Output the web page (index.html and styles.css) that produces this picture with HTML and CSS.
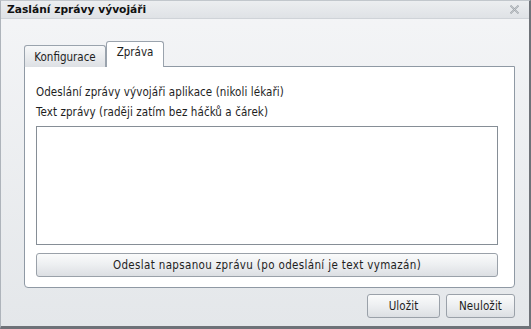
FILE: index.html
```html
<!DOCTYPE html>
<html lang="cs">
<head>
<meta charset="utf-8">
<title>Zaslání zprávy vývojáři</title>
<link rel="stylesheet" href="styles.css">
</head>
<body>
<div class="window">
  <div class="titlebar">
    <span class="title">Zaslání zprávy vývojáři</span>
    <span class="close" aria-label="Zavřít">
      <svg width="9" height="9" viewBox="0 0 9 9">
        <path d="M0.5 0.5 L8.5 8.5 M8.5 0.5 L0.5 8.5" stroke="#9aa0a6" stroke-width="1.6" fill="none"/>
        <path d="M0.5 0.5 L8.5 8.5 M8.5 0.5 L0.5 8.5" stroke="#e6e8ea" stroke-width="0.5" fill="none"/>
      </svg>
    </span>
  </div>
  <div class="content">
    <div class="tabs">
      <div class="tab">Konfigurace</div>
      <div class="tab active">Zpráva</div>
    </div>
    <div class="panel">
      <div class="line">Odeslání zprávy vývojáři aplikace (nikoli lékaři)</div>
      <div class="line">Text zprávy (raději zatím bez háčků a čárek)</div>
      <textarea class="message"></textarea>
      <button class="btn wide">Odeslat napsanou zprávu (po odeslání je text vymazán)</button>
    </div>
    <div class="footer">
      <button class="btn small">Uložit</button>
      <button class="btn small">Neuložit</button>
    </div>
  </div>
</div>
</body>
</html>
```
FILE: styles.css
```css
* { box-sizing: border-box; }
html, body { margin: 0; padding: 0; background: #ffffff; }
body {
  font-family: "DejaVu Sans Condensed", "DejaVu Sans", sans-serif;
  font-stretch: condensed;
  font-size: 11px;
  color: #1e1e1e;
}
.window {
  width: 531px;
  height: 329px;
  border-left: 1px solid #aeb4bb;
  border-top: 1px solid #c2c7cc;
  border-right: 2px solid #6e7278;
  border-bottom: 3px solid #6e7278;
  background: linear-gradient(#f4f5f7, #e4e7ea);
  display: flex;
  flex-direction: column;
}
.titlebar {
  height: 18px;
  display: flex;
  align-items: center;
  justify-content: space-between;
  padding: 0 10px 0 6px;
  background: linear-gradient(#eceef0, #dfe2e6);
  border-bottom: 1px solid #cfd3d8;
}
.title {
  font-family: "DejaVu Sans", sans-serif;
  font-stretch: normal;
  font-weight: bold;
  font-size: 10.7px;
  color: #111;
}
.close { display: flex; }
.content {
  flex: 1;
  padding: 22px 14px 0 23px;
  display: flex;
  flex-direction: column;
}
.tabs {
  display: flex;
  align-items: flex-end;
  height: 26px;
  position: relative;
  z-index: 1;
}
.tab {
  height: 22px;
  padding: 0 7px;
  display: flex;
  align-items: center;
  border: 1px solid #9aa3ad;
  border-bottom: none;
  border-radius: 3px 3px 0 0;
  background: linear-gradient(#f7f8f9, #dde0e4);
  color: #1e1e1e;
  font-size: 11.5px;
  width: 82px;
  justify-content: center;
}
.tab.active {
  height: 26px;
  width: 58px;
  background: #ffffff;
  align-items: flex-start;
  padding-top: 3px;
}
.panel {
  margin-top: -1px;
  height: 222px;
  background: #ffffff;
  border: 1px solid #8f99a4;
  border-radius: 0 0 4px 4px;
  padding: 15px 18px 0 11px;
  display: flex;
  flex-direction: column;
}
.line {
  height: 20px;
  line-height: 20px;
  font-size: 11.5px;
  letter-spacing: 0.08px;
}
.message {
  margin-top: 4px;
  width: 462px;
  height: 119px;
  border: 1px solid #868e96;
  border-radius: 0;
  resize: none;
  background: #fff;
}
.btn {
  font-family: inherit;
  font-stretch: condensed;
  font-size: 11.5px;
  color: #1e1e1e;
  border: 1px solid #9aa1a9;
  border-radius: 3px;
  background: linear-gradient(#fafbfb 0%, #eef0f2 45%, #dcdfe3 100%);
  padding: 0;
}
.wide {
  margin-top: 8px;
  width: 462px;
  height: 24px;
  letter-spacing: 0.35px;
}
.footer {
  display: flex;
  justify-content: flex-end;
  gap: 6px;
  margin-top: 6px;
}
.small {
  width: 73px;
  height: 24px;
  letter-spacing: 0.1px;
}
.small + .small { width: 69px; }
```
